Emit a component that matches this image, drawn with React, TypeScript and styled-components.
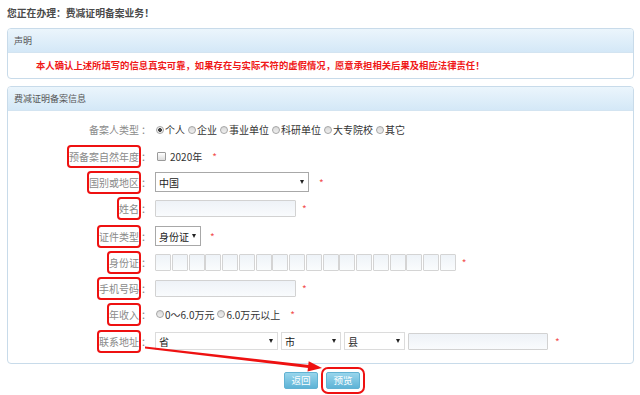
import React from "react"
import styled, { createGlobalStyle, css } from "styled-components"

const GlobalStyle = createGlobalStyle`
    html, body {
        margin: 0;
        background: #fff;
    }
    body {
        font-family: "Noto Sans CJK SC", "Noto Sans", sans-serif;
        color: #333;
    }
`

const Page = styled.div`
    position: relative;
    width: 640px;
    height: 395px;
    padding: 0 6px 0 7px;
    box-sizing: border-box;
    overflow: hidden;
`

const Title = styled.div`
    height: 28px;
    line-height: 26px;
    font-size: 9.8px;
    font-weight: bold;
    color: #4a4a4a;
`

const Panel = styled.section`
    border: 1px solid #c8dbea;
    border-radius: 4px;
    margin-bottom: 7px;
    background: #fff;
    overflow: hidden;
`

const PanelHead = styled.div`
    height: 23px;
    line-height: 23px;
    padding: 0 6px;
    font-size: 9px;
    color: #555;
    background: linear-gradient(#ebf5fc, #d4e8f7);
    border-bottom: 1px solid #d3e4f1;
`

const Notice = styled.div`
    height: 25px;
    line-height: 25px;
    padding-left: 28px;
    font-size: 9.35px;
    font-weight: bold;
    color: #f01818;
    white-space: nowrap;
`

const FormBody = styled.div`
    padding: 5px 0 8px;
`

const Row = styled.div<{ $h: number }>`
    display: grid;
    grid-template-columns: 143px 1fr;
    column-gap: 4px;
    align-items: center;
    height: ${p => p.$h}px;
`

const Label = styled.div`
    text-align: right;
    font-size: 10px;
    color: #8a8a8a;
    white-space: nowrap;
`

const Colon = styled.span`
    margin-left: 2px;
`

const LabelText = styled.span<{ $marked?: boolean }>`
    display: inline-block;
    line-height: 11px;
    ${p =>
        p.$marked &&
        css`
            padding: 4px 0;
            margin: -4px 0;
            border-radius: 2px;
            outline: 2px solid #ee1111;
        `}
`

const Field = styled.div`
    display: flex;
    align-items: center;
    font-size: 10px;
    color: #333;
    white-space: nowrap;
`

const Option = styled.label`
    display: inline-flex;
    align-items: center;
    margin-right: 2px;
    color: #333;
`

const Radio = styled.span<{ $checked?: boolean }>`
    display: inline-block;
    width: 6px;
    height: 6px;
    margin: 0 1px 0 1px;
    border-radius: 50%;
    border: 1px solid #a5a5a5;
    background: ${p =>
        p.$checked ? "radial-gradient(circle, #444 0 1.6px, #f2f2f2 2.2px)" : "linear-gradient(#d8d8d8, #f0f0f0)"};
`

const Checkbox = styled.span`
    display: inline-block;
    width: 7px;
    height: 7px;
    margin: 0 4px 0 2px;
    border: 1px solid #9a9a9a;
    border-radius: 1px;
    background: linear-gradient(#fff, #dcdcdc);
`

const Select = styled.div<{ $w: number; $h: number; $soft?: boolean }>`
    display: flex;
    align-items: center;
    justify-content: space-between;
    box-sizing: border-box;
    width: ${p => p.$w}px;
    height: ${p => p.$h}px;
    padding: 0 4px 0 3px;
    border: 1px solid ${p => (p.$soft ? "#dcdcdc" : "#a8a8a8")};
    background: #fff;
    font-size: 10px;
    color: #222;
    &::after {
        content: "";
        border-left: 2.5px solid transparent;
        border-right: 2.5px solid transparent;
        border-top: 4px solid #222;
    }
`

const TextInput = styled.div<{ $w: number }>`
    box-sizing: border-box;
    width: ${p => p.$w}px;
    height: 17px;
    border: 1px solid #d2d2d2;
    border-radius: 1px;
    background: linear-gradient(#eef2f7, #f9fbfd);
`

const IdBoxes = styled.div`
    display: flex;
    gap: 0.75px;
`

const IdBox = styled.span`
    box-sizing: border-box;
    width: 16px;
    height: 17px;
    border: 1px solid #d4d4d4;
    border-radius: 1px;
    background: linear-gradient(#eef3f8, #fafcfd);
`

const Star = styled.span<{ $gap: number }>`
    margin-left: ${p => p.$gap}px;
    color: #f25050;
    font-size: 10px;
`

const AddressRow = styled.div`
    display: flex;
    align-items: center;
    gap: 3px;
`

const Actions = styled.div`
    display: flex;
    justify-content: center;
    gap: 8px;
    margin-top: 8px;
    padding-left: 3px;
`

const Button = styled.button<{ $marked?: boolean }>`
    width: 34px;
    height: 17px;
    padding: 0;
    border: 1px solid #62b2d2;
    border-radius: 2px;
    background: linear-gradient(#98d5ec, #5db3d6);
    color: #fff;
    font-family: inherit;
    font-size: 9.5px;
    line-height: 15px;
    ${p =>
        p.$marked &&
        css`
            outline: 2px solid #ee1111;
            outline-offset: 3px;
        `}
`

const Arrow = styled.svg`
    position: absolute;
    left: 0;
    top: 0;
    pointer-events: none;
`

const kinds = ["企业", "事业单位", "科研单位", "大专院校", "其它"]

const App: React.FC = () => {
    return (
        <Page>
            <GlobalStyle />
            <Title>您正在办理：费减证明备案业务！</Title>

            <Panel>
                <PanelHead>声明</PanelHead>
                <Notice>本人确认上述所填写的信息真实可靠，如果存在与实际不符的虚假情况，愿意承担相关后果及相应法律责任！</Notice>
            </Panel>

            <Panel>
                <PanelHead>费减证明备案信息</PanelHead>
                <FormBody>
                    <Row $h={27}>
                        <Label>
                            <LabelText>备案人类型</LabelText>
                            <Colon>：</Colon>
                        </Label>
                        <Field>
                            <Option>
                                <Radio $checked />
                                个人
                            </Option>
                            {kinds.map(k => (
                                <Option key={k}>
                                    <Radio />
                                    {k}
                                </Option>
                            ))}
                        </Field>
                    </Row>
                    <Row $h={26}>
                        <Label>
                            <LabelText $marked>预备案自然年度</LabelText>
                            <Colon>：</Colon>
                        </Label>
                        <Field>
                            <Checkbox />
                            2020年
                            <Star $gap={10}>*</Star>
                        </Field>
                    </Row>
                    <Row $h={26}>
                        <Label>
                            <LabelText $marked>国别或地区</LabelText>
                            <Colon>：</Colon>
                        </Label>
                        <Field>
                            <Select $w={154} $h={20}>中国</Select>
                            <Star $gap={10}>*</Star>
                        </Field>
                    </Row>
                    <Row $h={27}>
                        <Label>
                            <LabelText $marked>姓名</LabelText>
                            <Colon>：</Colon>
                        </Label>
                        <Field>
                            <TextInput $w={141} />
                            <Star $gap={6}>*</Star>
                        </Field>
                    </Row>
                    <Row $h={28}>
                        <Label>
                            <LabelText $marked>证件类型</LabelText>
                            <Colon>：</Colon>
                        </Label>
                        <Field>
                            <Select $w={46} $h={20}>身份证</Select>
                            <Star $gap={9}>*</Star>
                        </Field>
                    </Row>
                    <Row $h={25}>
                        <Label>
                            <LabelText $marked>身份证</LabelText>
                            <Colon>：</Colon>
                        </Label>
                        <Field>
                            <IdBoxes>
                                {Array.from({ length: 18 }, (_, i) => (
                                    <IdBox key={i} />
                                ))}
                            </IdBoxes>
                            <Star $gap={6}>*</Star>
                        </Field>
                    </Row>
                    <Row $h={26}>
                        <Label>
                            <LabelText $marked>手机号码</LabelText>
                            <Colon>：</Colon>
                        </Label>
                        <Field>
                            <TextInput $w={141} />
                            <Star $gap={6}>*</Star>
                        </Field>
                    </Row>
                    <Row $h={26}>
                        <Label>
                            <LabelText $marked>年收入</LabelText>
                            <Colon>：</Colon>
                        </Label>
                        <Field>
                            <Option>
                                <Radio />0～6.0万元
                            </Option>
                            <Option>
                                <Radio />
                                6.0万元以上
                            </Option>
                            <Star $gap={8}>*</Star>
                        </Field>
                    </Row>
                    <Row $h={28}>
                        <Label>
                            <LabelText $marked>联系地址</LabelText>
                            <Colon>：</Colon>
                        </Label>
                        <Field>
                            <AddressRow>
                                <Select $w={123} $h={18} $soft>
                                    省
                                </Select>
                                <Select $w={60} $h={18} $soft>
                                    市
                                </Select>
                                <Select $w={61} $h={18} $soft>
                                    县
                                </Select>
                                <TextInput $w={140} />
                            </AddressRow>
                            <Star $gap={7}>*</Star>
                        </Field>
                    </Row>
                </FormBody>
            </Panel>

            <Actions>
                <Button>返回</Button>
                <Button $marked>预览</Button>
            </Actions>

            <Arrow width="640" height="395" viewBox="0 0 640 395">
                <polygon points="145,346.5 309,365 308.5,368 145,348.5" fill="#ee1111" />
                <polygon points="322,368 308.7,361.2 307.5,371.5" fill="#ee1111" />
            </Arrow>
        </Page>
    )
}

export default App
